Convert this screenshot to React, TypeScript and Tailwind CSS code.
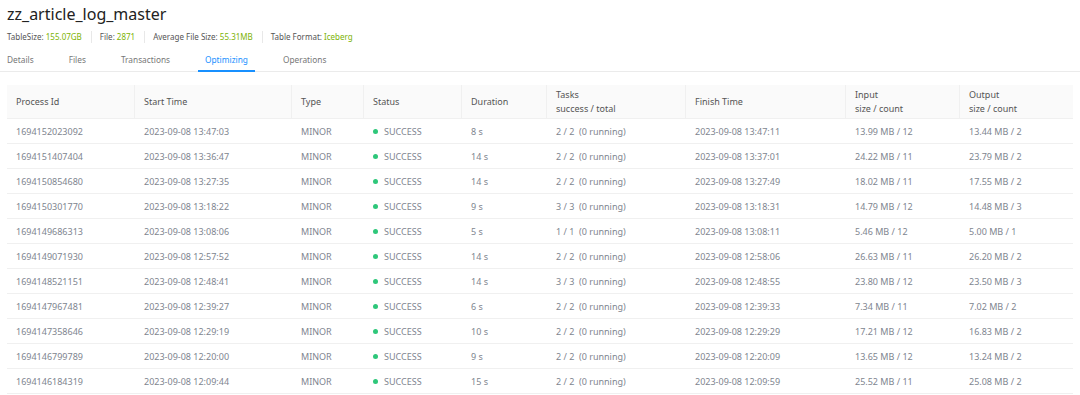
import React from "react";

const rows = [
  ["1694152023092", "2023-09-08 13:47:03", "8 s", "2 / 2", "2023-09-08 13:47:11", "13.99 MB / 12", "13.44 MB / 2"],
  ["1694151407404", "2023-09-08 13:36:47", "14 s", "2 / 2", "2023-09-08 13:37:01", "24.22 MB / 11", "23.79 MB / 2"],
  ["1694150854680", "2023-09-08 13:27:35", "14 s", "2 / 2", "2023-09-08 13:27:49", "18.02 MB / 11", "17.55 MB / 2"],
  ["1694150301770", "2023-09-08 13:18:22", "9 s", "3 / 3", "2023-09-08 13:18:31", "14.79 MB / 12", "14.48 MB / 3"],
  ["1694149686313", "2023-09-08 13:08:06", "5 s", "1 / 1", "2023-09-08 13:08:11", "5.46 MB / 12", "5.00 MB / 1"],
  ["1694149071930", "2023-09-08 12:57:52", "14 s", "2 / 2", "2023-09-08 12:58:06", "26.63 MB / 11", "26.20 MB / 2"],
  ["1694148521151", "2023-09-08 12:48:41", "14 s", "3 / 3", "2023-09-08 12:48:55", "23.80 MB / 12", "23.50 MB / 3"],
  ["1694147967481", "2023-09-08 12:39:27", "6 s", "2 / 2", "2023-09-08 12:39:33", "7.34 MB / 11", "7.02 MB / 2"],
  ["1694147358646", "2023-09-08 12:29:19", "10 s", "2 / 2", "2023-09-08 12:29:29", "17.21 MB / 12", "16.83 MB / 2"],
  ["1694146799789", "2023-09-08 12:20:00", "9 s", "2 / 2", "2023-09-08 12:20:09", "13.65 MB / 12", "13.24 MB / 2"],
  ["1694146184319", "2023-09-08 12:09:44", "15 s", "2 / 2", "2023-09-08 12:09:59", "25.52 MB / 11", "25.08 MB / 2"],
];

const cols = ["w-[128px]", "w-[157px]", "w-[72px]", "w-[98px]", "w-[85px]", "w-[139px]", "w-[160px]", "w-[114px]", "w-[113px]"];

const Meta = ({ label, value, last }: { label: string; value: string; last?: boolean }) => (
  <div className={`flex items-center ${last ? "" : "border-r border-[#e8e8e8] pr-[9px] mr-[8px]"}`}>
    <span className="text-[#555]">{label}:&nbsp;</span>
    <span className="text-[#7cb305]">{value}</span>
  </div>
);

export default function App() {
  const tabs = ["Details", "Files", "Transactions", "Optimizing", "Operations"];
  return (
    <div className="w-[1080px] h-[395px] bg-white overflow-hidden font-['Noto_Sans',sans-serif]">
      <div className="px-[7px] pt-[3px]">
        <h1 className="text-[16px] leading-[22px] text-[#222]">zz_article_log_master</h1>
        <div className="flex items-center text-[8px] leading-[12px] mt-[6px]">
          <Meta label="TableSize" value="155.07GB" />
          <Meta label="File" value="2871" />
          <Meta label="Average File Size" value="55.31MB" />
          <Meta label="Table Format" value="Iceberg" last />
        </div>
      </div>
      <div className="flex text-[8.3px] border-b border-[#ebebeb] mt-[10px] px-[7px] gap-[35px]">
        {tabs.map((t, i) => (
          <div
            key={t}
            className={`pb-[4px] pt-[1px] ${i === 3 ? "text-[#1890ff] border-b-2 border-[#1890ff] -mb-[1px] px-[7px] -mx-[7px]" : "text-[#777]"}`}
          >
            {t}
          </div>
        ))}
      </div>
      <div className="px-[7px] pt-[13px]">
        <div className="w-[1066px] text-[9px]">
          <div className="flex bg-[#fafafa] h-[34px] items-center border-b border-[#f0f0f0] text-[#555]">
            {["Process Id", "Start Time", "Type", "Status", "Duration", "Tasks|success / total", "Finish Time", "Input|size / count", "Output|size / count"].map((h, i) => (
              <div key={h} className={`${cols[i]} h-full flex items-center px-[9px] relative`}>
                {h.includes("|") ? (
                  <div className="leading-[14px]">
                    <div>{h.split("|")[0]}</div>
                    <div>{h.split("|")[1]}</div>
                  </div>
                ) : (
                  <span>{h}</span>
                )}
                {i < 8 && <div className="absolute right-0 top-0 h-full w-px bg-[#f0f0f0]" />}
              </div>
            ))}
          </div>
          {rows.map((r) => (
            <div key={r[0]} className="flex h-[25px] items-center border-b border-[#f0f0f0] text-[#80858f]">
              <div className={`${cols[0]} px-[9px]`}>{r[0]}</div>
              <div className={`${cols[1]} px-[9px]`}>{r[1]}</div>
              <div className={`${cols[2]} px-[9px]`}>MINOR</div>
              <div className={`${cols[3]} px-[9px] flex items-center`}>
                <span className="w-[5px] h-[5px] rounded-full bg-[#2ec77a] mr-[6px]" />
                SUCCESS
              </div>
              <div className={`${cols[4]} px-[9px]`}>{r[2]}</div>
              <div className={`${cols[5]} px-[9px] whitespace-pre`}>{r[3] + "  (0 running)"}</div>
              <div className={`${cols[6]} px-[9px]`}>{r[4]}</div>
              <div className={`${cols[7]} px-[9px]`}>{r[5]}</div>
              <div className={`${cols[8]} px-[9px]`}>{r[6]}</div>
            </div>
          ))}
        </div>
      </div>
    </div>
  );
}
